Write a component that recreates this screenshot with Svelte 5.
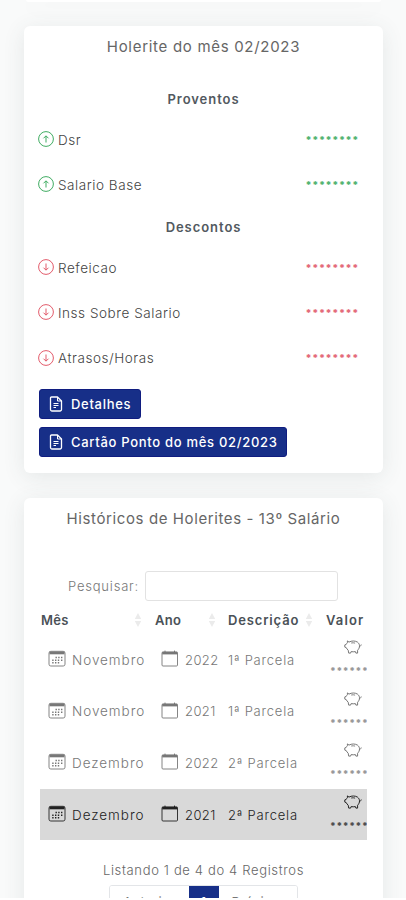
<script>
  const proventos = ["Dsr", "Salario Base"];
  const descontos = ["Refeicao", "Inss Sobre Salario", "Atrasos/Horas"];

  const historico = [
    { mes: "Novembro", ano: 2022, descricao: "1ª Parcela" },
    { mes: "Novembro", ano: 2021, descricao: "1ª Parcela" },
    { mes: "Dezembro", ano: 2022, descricao: "2ª Parcela" },
    { mes: "Dezembro", ano: 2021, descricao: "2ª Parcela" },
  ];

  let busca = "";
  let selecionado = 3;
</script>

<main>
  <section class="card previous"></section>

  <section class="card payslip">
    <h2 class="payslip-title">Holerite do mês 02/2023</h2>

    <h3>Proventos</h3>
    {#each proventos as nome}
      <div class="entry income">
        <svg><use href="#arrow-up" /></svg>
        <span class="name">{nome}</span>
        <span class="mask">********</span>
      </div>
    {/each}

    <h3 class="discounts">Descontos</h3>
    {#each descontos as nome}
      <div class="entry discount">
        <svg><use href="#arrow-down" /></svg>
        <span class="name">{nome}</span>
        <span class="mask">********</span>
      </div>
    {/each}

    <div class="actions">
      <button class="details"><svg><use href="#file" /></svg><span>Detalhes</span></button>
      <button class="timecard"
        ><svg><use href="#file" /></svg><span>Cartão Ponto do mês 02/2023</span></button
      >
    </div>
  </section>

  <section class="card history">
    <h2 class="history-title">Históricos de Holerites - 13º Salário</h2>

    <label class="search">
      <span>Pesquisar:</span>
      <input type="text" bind:value={busca} />
    </label>

    <table>
      <thead>
        <tr>
          <th class="c-mes"><div>Mês<svg><use href="#sort" /></svg></div></th>
          <th class="c-ano"><div>Ano<svg><use href="#sort" /></svg></div></th>
          <th class="c-desc"><div>Descrição<svg><use href="#sort" /></svg></div></th>
          <th class="c-valor"><div>Valor</div></th>
        </tr>
      </thead>
      <tbody>
        {#each historico as item, i}
          <tr class:selected={i === selecionado} on:click={() => (selecionado = i)}>
            <td>
              <div class="cell mes"><svg><use href="#calendar-days" /></svg>{item.mes}</div>
            </td>
            <td>
              <div class="cell ano"><svg><use href="#calendar" /></svg>{item.ano}</div>
            </td>
            <td><span class="desc">{item.descricao}</span></td>
            <td>
              <div class="valor">
                <svg><use href="#piggy" /></svg>
                <span>******</span>
              </div>
            </td>
          </tr>
        {/each}
      </tbody>
    </table>

    <p class="count">Listando 1 de 4 do 4 Registros</p>
    <nav>
      <button>Anterior</button>
      <button class="active">1</button>
      <button>Próximo</button>
    </nav>
  </section>
</main>

<svg class="hidden">
  <defs>
    <symbol id="arrow-up" viewBox="0 0 16 16" fill="none" stroke="currentColor">
      <circle cx="8" cy="8" r="7.4" stroke-width="0.95" />
      <path d="M8 11.5V5M5.5 7.3L8 4.8l2.5 2.5" stroke-width="0.95" />
    </symbol>
    <symbol id="arrow-down" viewBox="0 0 16 16" fill="none" stroke="currentColor">
      <circle cx="8" cy="8" r="7.4" stroke-width="0.95" />
      <path d="M8 4.5V11M5.5 8.7L8 11.2l2.5-2.5" stroke-width="0.95" />
    </symbol>
    <symbol id="file" viewBox="0 0 14 16" fill="none" stroke="currentColor">
      <path
        d="M2.5 1h6L12.5 5v8.5a1.5 1.5 0 0 1-1.5 1.5H3a1.5 1.5 0 0 1-1.5-1.5V2a1 1 0 0 1 1-1z"
        stroke-width="1.3"
        stroke-linejoin="round"
      />
      <path d="M8.5 1v4h4" stroke-width="1" />
      <path d="M4.5 7.5h5M4.5 9.5h5M4.5 11.5h2.5" stroke-width="1.1" />
    </symbol>
    <symbol id="sort" viewBox="0 0 8 14" fill="currentColor">
      <path d="M4 0l3.2 6H.8zM4 14L.8 8h6.4z" />
    </symbol>
    <symbol id="calendar-days" viewBox="0 0 18 17" fill="none" stroke="currentColor">
      <rect x="1" y="1.3" width="16" height="14.7" rx="1.8" stroke-width="0.9" />
      <path d="M1.5 2.9h15" stroke-width="2.8" />
      <path
        d="M7.5 7.5h1.4M10.2 7.5h1.4M13 7.5h1.4M4.2 10.2h1.4M7 10.2h1.4M9.8 10.2h1.4M13 10.2h1.4M4.2 12.8h1.4M7 12.8h1.4M9.8 12.8h1.4"
        stroke-width="1.4"
      />
    </symbol>
    <symbol id="calendar" viewBox="0 0 18 17" fill="none" stroke="currentColor">
      <rect x="1" y="2" width="15.5" height="14" rx="1" stroke-width="0.9" />
      <path d="M1.2 3.1h15.1" stroke-width="2.6" />
      <path d="M4 .6v2M13.5 .6v2" stroke-width="1" />
    </symbol>
    <symbol id="piggy" viewBox="0 0 18 14" fill="none" stroke="currentColor">
      <path
        d="M5 2.1c2.6-1.500 6.300-1.500 8.600.1 1.100.9 1.800 2.100 1.900 3.500.1 1.800-.7 3.400-1.900 4.500v2.900h-1.700l-.5-1.500c-1.400.3-2.900.3-4.300 0l-.5 1.500H4.700L4.200 10.200C3.200 9.400 2.600 8.500 2.300 7.700L.8 7.100V4.900l1.400-.5c.3-.7.700-1.200 1.200-1.600V.9z"
        stroke-width="1"
        stroke-linejoin="round"
      />
      <path d="M7.200 3c1.200-.3 2.800-.3 3.900.1M15.500 6c1 .2 1.600-.3 1.800-1.500" stroke-width="0.9" />
    </symbol>
  </defs>
</svg>

<style>
  :global(body) {
    background-color: #fff;
  }

  main {
    box-sizing: border-box;
    height: 898px;
    overflow: hidden;
    padding: 0 23px 0 24px;
    background-color: #f9fafa;
    color: #555;
    font-family: Inter, "Open Sans", sans-serif;
    font-size: 13px;
    font-weight: 300;
  }

  .hidden {
    position: absolute;
    width: 0;
    height: 0;
  }

  .card {
    box-sizing: border-box;
    background-color: #fff;
    border-radius: 6px;
    box-shadow: 0 4px 22px rgba(60, 80, 80, 0.11);
  }

  .previous {
    height: 2px;
    border-radius: 0 0 6px 6px;
    margin: 0 2px 24px;
  }

  .payslip {
    height: 447px;
    padding: 10px 14px 0;
    margin-bottom: 25px;
  }

  .history {
    height: 440px;
    padding: 10px 16px 0;
  }

  h2,
  h3,
  p {
    margin: 0;
    text-align: center;
    white-space: nowrap;
  }

  h2 {
    height: 22px;
    line-height: 22px;
    font-size: 15px;
    font-weight: 400;
    color: #666;
  }

  .payslip-title {
    letter-spacing: 0.7px;
  }

  .history-title {
    letter-spacing: 0.6px;
  }

  h3 {
    height: 20px;
    line-height: 20px;
    margin-top: 31px;
    margin-bottom: 8px;
    font-size: 13px;
    font-weight: 600;
    letter-spacing: 0.95px;
    color: #525960;
  }

  .discounts {
    margin-top: 10px;
  }

  .entry {
    display: flex;
    align-items: center;
    height: 45px;
  }

  .entry svg {
    width: 16px;
    height: 16px;
    margin-right: 4px;
    margin-top: -1px;
  }

  .entry .name {
    font-size: 13.5px;
    letter-spacing: 0.55px;
    color: #444;
  }

  .discount {
    height: 45.3px;
  }

  .income svg,
  .income .mask {
    color: #36a85a;
  }

  .discount svg,
  .discount .mask {
    color: #e05263;
  }

  .mask {
    margin-left: auto;
    margin-right: 10px;
    font-size: 10px;
    font-weight: 900;
    letter-spacing: 0.6px;
    line-height: 16px;
    opacity: 0.85;
  }

  .actions {
    display: flex;
    flex-direction: column;
    align-items: flex-start;
    gap: 8px;
    padding: 8px 1px 0;
  }

  .actions button {
    display: flex;
    align-items: center;
    height: 30px;
    padding: 0 0 0 9px;
    border: 1px solid #101d80;
    border-radius: 3px;
    background-color: #172f88;
    color: #fff;
    font-family: inherit;
    font-size: 13px;
    font-weight: 500;
    letter-spacing: 0.7px;
    white-space: nowrap;
  }

  .actions svg {
    width: 14px;
    height: 16px;
    margin-right: 8px;
  }

  .actions .details {
    width: 102px;
  }

  .actions .timecard {
    width: 248px;
  }

  .search {
    display: flex;
    align-items: center;
    margin: 41px 0 0 28px;
    color: #777;
  }

  .search span {
    width: 77px;
    letter-spacing: 0.8px;
  }

  .search input {
    box-sizing: border-box;
    width: 193px;
    height: 30px;
    border: 1px solid #e2e2e2;
    border-radius: 3px;
    outline: none;
  }

  table {
    width: 327px;
    table-layout: fixed;
    border-collapse: collapse;
  }

  th,
  td {
    padding: 0;
    text-align: left;
    white-space: nowrap;
  }

  th {
    height: 33px;
    font-size: 13px;
    font-weight: 600;
    letter-spacing: 0.3px;
    color: #4a5157;
  }

  th div {
    display: flex;
    align-items: center;
    justify-content: space-between;
    margin-left: 1px;
    padding: 4px 12px 0 0;
  }

  th svg {
    width: 8px;
    height: 14px;
    color: #ebebeb;
  }

  .c-mes {
    width: 114px;
  }

  .c-ano {
    width: 73px;
  }

  .c-desc {
    width: 99px;
  }

  .c-valor {
    width: 41px;
  }

  .c-ano div {
    padding-right: 11px;
  }

  .c-desc div {
    padding-right: 13px;
    letter-spacing: 0.85px;
  }

  .c-valor div {
    margin-left: 0;
    padding-right: 0;
    letter-spacing: 1.1px;
  }

  tbody tr {
    height: 51.6px;
    color: #777;
  }

  .selected {
    background-color: #d9d9d9;
    color: #222;
  }

  .cell {
    display: flex;
    align-items: center;
    padding-left: 8px;
  }

  .cell svg {
    width: 18px;
    height: 17px;
    margin-right: 6px;
    margin-top: -2px;
  }

  .ano {
    padding-left: 7px;
    letter-spacing: 0.4px;
  }

  .mes {
    font-size: 13.5px;
    letter-spacing: 0.95px;
  }

  .desc {
    padding-left: 1px;
    letter-spacing: 0.8px;
  }

  .valor {
    display: flex;
    flex-direction: column;
    width: 37px;
    margin-left: 4px;
    overflow: hidden;
  }

  .valor svg {
    width: 18px;
    height: 14px;
    margin: 0 0 10px 14px;
  }

  .valor span {
    margin-bottom: 2px;
    font-size: 9.5px;
    font-weight: 900;
    letter-spacing: 0.6px;
    line-height: 13px;
    opacity: 0.75;
  }

  .count {
    margin-top: 20px;
    line-height: 20px;
    letter-spacing: 0.65px;
    color: #666;
  }

  nav {
    display: flex;
    width: 189px;
    margin: 5px auto 0 69px;
    border: 1px solid #e3e5e8;
    box-sizing: border-box;
    border-radius: 3px;
    overflow: hidden;
  }

  nav button {
    height: 31px;
    padding: 0;
    border: none;
    flex: 1;
    background-color: #fff;
    color: #777;
    font-family: inherit;
    font-size: 13px;
    font-weight: 400;
    line-height: 28px;
    letter-spacing: 0.4px;
  }

  nav .active {
    flex: 0 0 30px;
    background-color: #172f88;
    color: #fff;
    font-weight: 600;
  }
</style>
